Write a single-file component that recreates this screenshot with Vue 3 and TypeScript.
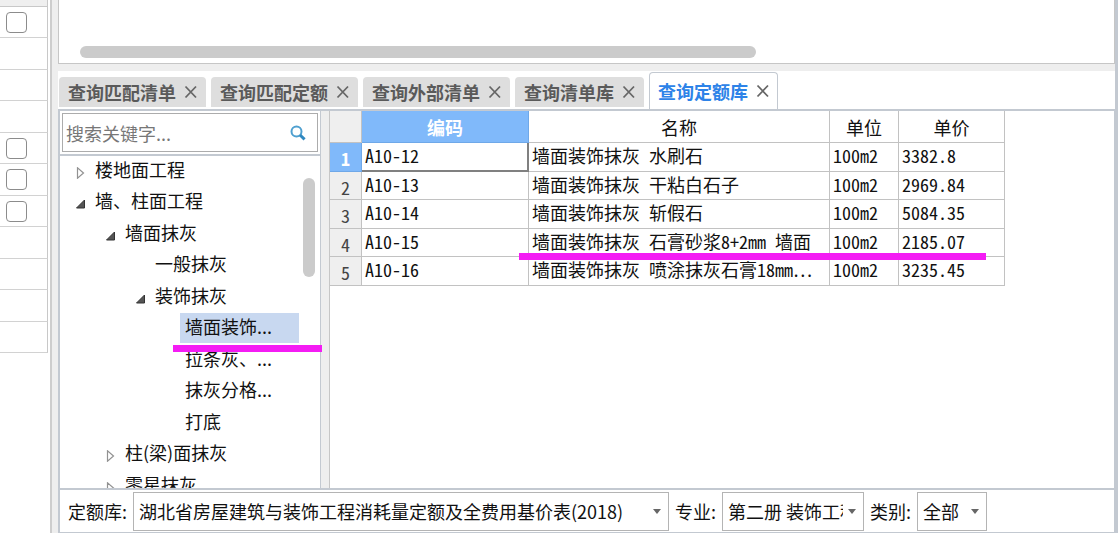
<script setup lang="ts">
import { ref } from 'vue'

interface TreeNode {
  label: string
  level: number
  state: 'open' | 'closed' | 'leaf'
  selected?: boolean
}

const gridRows: boolean[] = [true, false, false, false, true, true, true, false, false, false, false]

const tabs = ['查询匹配清单', '查询匹配定额', '查询外部清单', '查询清单库', '查询定额库']
const activeTab = ref('查询定额库')

const keyword = ref('')

const nodes: TreeNode[] = [
  { label: '楼地面工程', level: 0, state: 'closed' },
  { label: '墙、柱面工程', level: 0, state: 'open' },
  { label: '墙面抹灰', level: 1, state: 'open' },
  { label: '一般抹灰', level: 2, state: 'leaf' },
  { label: '装饰抹灰', level: 2, state: 'open' },
  { label: '墙面装饰...', level: 3, state: 'leaf', selected: true },
  { label: '拉条灰、...', level: 3, state: 'leaf' },
  { label: '抹灰分格...', level: 3, state: 'leaf' },
  { label: '打底', level: 3, state: 'leaf' },
  { label: '柱(梁)面抹灰', level: 1, state: 'closed' },
  { label: '零星抹灰', level: 1, state: 'closed' },
]

const items = [
  { code: 'A10-12', name: '墙面装饰抹灰 水刷石', unit: '100m2', price: '3382.8' },
  { code: 'A10-13', name: '墙面装饰抹灰 干粘白石子', unit: '100m2', price: '2969.84' },
  { code: 'A10-14', name: '墙面装饰抹灰 斩假石', unit: '100m2', price: '5084.35' },
  { code: 'A10-15', name: '墙面装饰抹灰 石膏砂浆8+2mm 墙面', unit: '100m2', price: '2185.07' },
  { code: 'A10-16', name: '墙面装饰抹灰 喷涂抹灰石膏18mm⋯', unit: '100m2', price: '3235.45' },
]
</script>

<template>
  <div class="app">
    <aside class="side">
      <div class="side-head"></div>
      <div v-for="(hasBox, i) in gridRows" :key="i" class="side-row">
        <input v-if="hasBox" type="checkbox" :aria-label="'行 ' + (i + 1)" />
      </div>
    </aside>

    <main class="main">
      <section class="upper">
        <div class="hbar"></div>
      </section>

      <nav class="tabs">
        <div v-for="t in tabs" :key="t" class="tab" :class="{ active: t === activeTab }">
          <button type="button" class="tab-name" @click="activeTab = t">{{ t }}</button>
          <button type="button" class="tab-close" :aria-label="'关闭' + t">
            <svg width="14" height="14" viewBox="0 0 14 14">
              <path d="M1.5 1.5 12 12.5M12 1.5 1.5 12.5" fill="none" stroke="currentColor" stroke-width="1.8" />
            </svg>
          </button>
        </div>
      </nav>

      <section class="body">
        <div class="nav">
          <div class="search-wrap">
            <label class="search">
              <input v-model="keyword" type="text" placeholder="搜索关键字..." aria-label="搜索关键字" />
              <svg width="16" height="16" viewBox="0 0 16 16">
                <circle cx="6.5" cy="6.5" r="5" fill="none" stroke="#4fa0d0" stroke-width="2" />
                <path d="M10 10l4.6 4.4" stroke="#3088c0" stroke-width="3" />
              </svg>
            </label>
          </div>
          <div class="tree">
            <ul>
              <li v-for="n in nodes" :key="n.label" :class="['node', 'level-' + n.level, { selected: n.selected }]">
                <svg v-if="n.state === 'open'" class="mark" width="12" height="12" viewBox="0 0 12 12">
                  <path d="M9.5 2v8H1.5z" fill="#555" stroke="#333" />
                </svg>
                <svg v-else-if="n.state === 'closed'" class="mark" width="12" height="12" viewBox="0 0 12 12">
                  <path d="M2.5 .8v10.4L8.5 6z" fill="#fff" stroke="#929292" stroke-width="1.2" />
                </svg>
                <span v-else class="mark"></span>
                <span class="node-text">{{ n.label }}</span>
                <i v-if="n.selected" class="stroke-tree"></i>
              </li>
            </ul>
            <div class="vbar"></div>
          </div>
        </div>

        <div class="result">
          <table>
            <colgroup>
              <col class="c-no" /><col class="c-code" /><col class="c-name" /><col class="c-unit" /><col class="c-price" />
            </colgroup>
            <thead>
              <tr>
                <th class="no"></th>
                <th class="current">编码</th>
                <th>名称</th>
                <th>单位</th>
                <th>单价</th>
              </tr>
            </thead>
            <tbody>
              <tr v-for="(r, i) in items" :key="r.code">
                <th class="no" :class="{ current: i === 0 }">{{ i + 1 }}</th>
                <td :class="{ focus: i === 0 }">{{ r.code }}</td>
                <td class="name">{{ r.name }}<i v-if="i === 3" class="stroke-row"></i></td>
                <td>{{ r.unit }}</td>
                <td>{{ r.price }}</td>
              </tr>
            </tbody>
          </table>
        </div>
      </section>

      <footer class="filters">
        <label for="lib">定额库:</label>
        <span class="select lib">
          <select id="lib">
            <option>湖北省房屋建筑与装饰工程消耗量定额及全费用基价表(2018)</option>
          </select>
        </span>
        <label for="major">专业:</label>
        <span class="select major">
          <select id="major">
            <option>第二册 装饰工程</option>
          </select>
        </span>
        <label for="kind">类别:</label>
        <span class="select kind">
          <select id="kind">
            <option>全部</option>
          </select>
        </span>
      </footer>
    </main>
  </div>
</template>

<style>
body {
  margin: 0;
  background: #fff;
}
</style>

<style scoped>
.app {
  display: flex;
  height: 100vh;
  overflow: hidden;
  box-sizing: border-box;
  font: 18px/24px "Noto Sans CJK SC", sans-serif;
  color: #111;
  background: #fff;
}
.app * {
  box-sizing: border-box;
}
button,
input,
select {
  font: inherit;
  color: inherit;
  margin: 0;
  padding: 0;
  border: 0;
  background: none;
}

.side {
  flex: none;
  width: 48px;
}
.side-head {
  height: 7px;
  background: #efefef;
  border-right: 1px solid #c8c8c8;
  border-bottom: 1px solid #c8c8c8;
}
.side-row {
  display: flex;
  align-items: center;
  height: 31px;
  padding-left: 6px;
  border-right: 1px solid #c8c8c8;
  border-bottom: 1px solid #d2d2d2;
}
.side-row:nth-child(odd) {
  height: 32px;
}
.side-row input {
  appearance: none;
  width: 21px;
  height: 21px;
  border: 1px solid #8c8c8c;
  border-radius: 4px;
  background: #fff;
}

.main {
  flex: 1;
  min-width: 0;
  display: flex;
  flex-direction: column;
  margin-left: 2px;
  padding-left: 6px;
  border-left: 2px solid #cdcdcd;
  border-right: 3px solid #c3c9d1;
  background: #eee;
}
.upper {
  flex: none;
  height: 64px;
  padding: 46px 0 0 21px;
  border: 1px solid #c6c6c6;
  border-top: 0;
  background: #fff;
}
.hbar {
  width: calc(65% + 4px);
  height: 12px;
  border-radius: 6px;
  background: #cbcbcb;
}

.tabs {
  flex: none;
  display: flex;
  align-items: flex-end;
  gap: 5px;
  height: 38px;
  margin-top: 7px;
  padding: 0 0 2px 1px;
  background: #fff;
}
.tab {
  display: flex;
  align-items: center;
  gap: 8px;
  height: 30px;
  padding: 0 8px 0 9px;
  border-radius: 4px 4px 0 0;
  background: #dedede;
  color: #5a5a5a;
}
.tab-name {
  font-weight: 700;
  white-space: nowrap;
}
.tab-close {
  display: flex;
  color: #666;
}
.tab.active {
  height: 37px;
  margin-bottom: -2px;
  padding: 0 7px 0 8px;
  border: 1px solid #c3c9d1;
  border-bottom: 0;
  background: #fff;
  color: #2d83e8;
}

.body {
  flex: 1;
  min-height: 0;
  display: flex;
  gap: 8px;
  border: solid #c3c9d1;
  border-width: 2px 1px 2px 2px;
}
.nav {
  flex: none;
  width: 261px;
  display: flex;
  flex-direction: column;
  border-right: 1px solid #c3c9d1;
  background: #fff;
}
.search-wrap {
  flex: none;
  padding: 2px;
  border-bottom: 2px solid #c3c9d1;
}
.search {
  display: flex;
  align-items: center;
  height: 39px;
  padding: 0 11px 0 3px;
  border: 1px solid #acacac;
}
.search input {
  flex: 1;
  min-width: 0;
  outline: 0;
}
.search input::placeholder {
  color: #777;
}
.tree {
  flex: 1;
  min-height: 0;
  position: relative;
  overflow-x: visible;
  overflow-y: clip;
}
.tree ul {
  list-style: none;
  margin: 0;
  padding: 0;
}
.node {
  display: flex;
  align-items: center;
  height: 31px;
  position: relative;
}
.node:nth-child(even) {
  height: 32px;
}
.node:first-child {
  height: 30px;
}
.level-0 { padding-left: 15px; }
.level-1 { padding-left: 45px; }
.level-2 { padding-left: 75px; }
.level-3 { padding-left: 105px; }
.mark {
  width: 12px;
  margin-right: 3px;
  margin-top: 4px;
}
.node-text {
  padding: 1px 5px 5px;
}
.selected .node-text {
  width: 119px;
  background: #c8d8f0;
}
.stroke-tree {
  position: absolute;
  left: 113px;
  bottom: -8px;
  width: 149px;
  height: 7px;
  background: #f41cf4;
  z-index: 2;
}
.vbar {
  position: absolute;
  top: 22px;
  right: 5px;
  width: 12px;
  height: 99px;
  border-radius: 6px;
  background: #cbcbcb;
}

.result {
  flex: 1;
  min-width: 0;
  border-left: 1px solid #c6c6c6;
  background: #fff;
}
table {
  table-layout: fixed;
  width: 675px;
  border-collapse: separate;
  border-spacing: 0;
  font-feature-settings: "hwid";
}
.c-no { width: 32px; }
.c-code { width: 167px; }
.c-name { width: 301px; }
.c-unit { width: 69px; }
.c-price { width: 106px; }
th,
td {
  padding: 0 3px 4px;
  border-right: 1px solid #c2c2c2;
  border-bottom: 1px solid #c2c2c2;
  white-space: nowrap;
  text-align: left;
  font-weight: 400;
  line-height: 20px;
}
thead th {
  height: 32px;
  padding-bottom: 0;
  text-align: center;
}
tbody tr {
  height: 29px;
}
tbody tr:nth-child(even) {
  height: 28px;
}
.no {
  padding: 2px 0 0;
  background: #efefef;
  color: #444;
  text-align: center;
}
.current {
  background: #80b9fa;
  border-color: #6fa8e8;
  color: #fff;
  font-weight: 700;
}
.focus {
  padding-bottom: 3px;
  border-right: 2px solid #808080;
  border-bottom: 2px solid #808080;
}
.name {
  position: relative;
}
.stroke-row {
  position: absolute;
  left: -10px;
  bottom: -4px;
  width: 467px;
  height: 7px;
  background: #f41cf4;
  z-index: 2;
}

.filters {
  flex: none;
  display: flex;
  align-items: center;
  height: 43px;
  padding-left: 8px;
  border: solid #c3c9d1;
  border-width: 0 1px 1px 2px;
  background: #fff;
}
.filters label {
  margin-right: 6px;
  white-space: nowrap;
}
.select {
  position: relative;
  margin-right: 6px;
}
.select::after {
  content: "";
  position: absolute;
  right: 8px;
  top: 17px;
  border: 4px solid transparent;
  border-top: 5px solid #666;
  border-bottom: 0;
  pointer-events: none;
}
select {
  appearance: none;
  display: block;
  width: 100%;
  height: 39px;
  padding: 0 20px 0 5px;
  border: 1px solid #b4b4b4;
  border-radius: 0;
  background: #fff;
}
.lib { width: 536px; }
.major { width: 142px; }
.kind { width: 70px; }
</style>
